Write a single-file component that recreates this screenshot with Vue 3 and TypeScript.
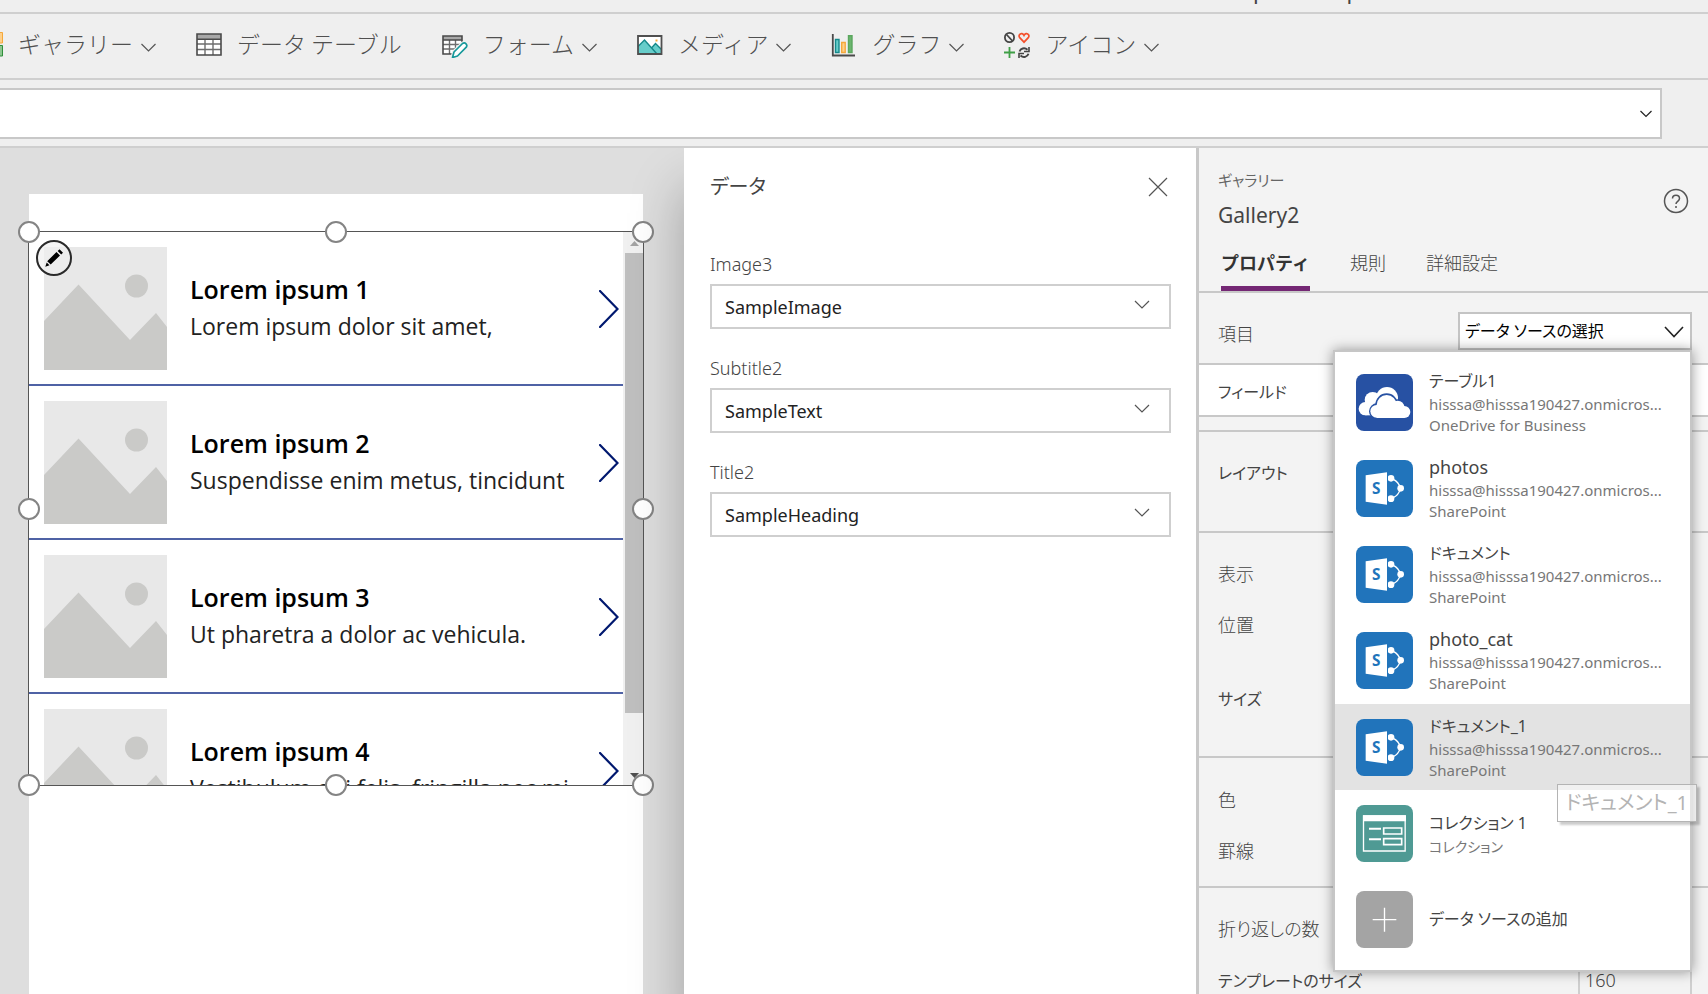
<script setup lang="ts">
import { ref } from 'vue'

interface Tool {
  id: string
  label: string
  menu: boolean
}
interface Source {
  name: string
  account?: string
  kind?: string
  kana?: boolean
  icon: 'onedrive' | 'sharepoint' | 'collection' | 'add'
}

const tools: Tool[] = [
  { id: 'gallery', label: 'ギャラリー', menu: true },
  { id: 'table', label: 'データ テーブル', menu: false },
  { id: 'form', label: 'フォーム', menu: true },
  { id: 'media', label: 'メディア', menu: true },
  { id: 'chart', label: 'グラフ', menu: true },
  { id: 'icons', label: 'アイコン', menu: true },
]

const rows = [
  { title: 'Lorem ipsum 1', text: 'Lorem ipsum dolor sit amet,' },
  { title: 'Lorem ipsum 2', text: 'Suspendisse enim metus, tincidunt' },
  { title: 'Lorem ipsum 3', text: 'Ut pharetra a dolor ac vehicula.' },
  { title: 'Lorem ipsum 4', text: 'Vestibulum dui felis, fringilla nec mi.' },
]

const handles = ['nw', 'n', 'ne', 'w', 'e', 'sw', 's', 'se']

const fields = [
  { label: 'Image3', value: 'SampleImage' },
  { label: 'Subtitle2', value: 'SampleText' },
  { label: 'Title2', value: 'SampleHeading' },
]

const account = 'hisssa@hisssa190427.onmicros...'
const sources: Source[] = [
  { name: 'テーブル1', account, kind: 'OneDrive for Business', icon: 'onedrive', kana: true },
  { name: 'photos', account, kind: 'SharePoint', icon: 'sharepoint' },
  { name: 'ドキュメント', account, kind: 'SharePoint', icon: 'sharepoint', kana: true },
  { name: 'photo_cat', account, kind: 'SharePoint', icon: 'sharepoint' },
  { name: 'ドキュメント_1', account, kind: 'SharePoint', icon: 'sharepoint', kana: true },
  { name: 'コレクション 1', kind: 'コレクション', icon: 'collection', kana: true },
  { name: 'データ ソースの追加', icon: 'add', kana: true },
]
const hovered = ref(4)
const formula = ref('')
const templateSize = ref('160')
</script>

<template>
  <div class="app">
    <header class="topbar"><span>p</span><span>p</span></header>

    <nav class="toolbar">
      <button v-for="t in tools" :key="t.id" type="button" class="tool">
        <svg class="tool-icon" viewBox="0 0 26 26" fill="none" aria-hidden="true">
          <g v-if="t.id === 'gallery'">
            <path d="M13.5 .5h12v10.500h-12z" fill="#ffd08a" stroke="#f5a83a" />
            <path d="M13.500 13.500h12v10.500h-12z" fill="#8cc68f" stroke="#2f8f3a" />
          </g>
          <g v-else-if="t.id === 'table'">
            <path d="M1 2h24v21H1z" fill="#fff" />
            <path d="M1 2h24v5H1z" fill="#a8a8a8" />
            <path d="M1 12h24M1 17.500h24M9 7v16M17 7v16" stroke="#6d6d6d" stroke-width="1.400" />
            <path d="M1 7.200h24M1 2h24v21H1z" stroke="#4a4a4a" stroke-width="1.600" />
          </g>
          <g v-else-if="t.id === 'form'">
            <path d="M1 4h19v18H1z" fill="#fff" />
            <path d="M1 4h19v4H1z" fill="#a8a8a8" />
            <path d="M1 12.500h19M1 17h14M7.500 8v14M13.500 8v12" stroke="#6d6d6d" stroke-width="1.400" />
            <path d="M20 12V4H1v18h9M1 8h19" stroke="#4a4a4a" stroke-width="1.600" />
            <path d="M10.500 25.500l1.500-5.500L20.500 11.500q2-1.200 3.500.300t.3 3.400L15.500 24z" fill="#fff" stroke="#efefef" stroke-width="4" />
            <path d="M10.500 25.500l1.500-5.500L20.500 11.500q2-1.200 3.500.300t.3 3.400L15.500 24z" fill="#fff" stroke="#16989a" stroke-width="1.700" stroke-linejoin="round" />
          </g>
          <g v-else-if="t.id === 'media'">
            <path d="M1 4h23.500v18H1z" fill="#fff" />
            <path d="M1 14.500L7.500 8l7 8 4-4.500 6 6V22H1z" fill="#67cdca" />
            <path d="M1 14.500L7.500 8 20 22M14.500 16l4-4.500 6 6" stroke="#16898a" stroke-width="1.400" />
            <path d="M18.500 7.500h2v2h-2z" fill="#f5a83a" />
            <path d="M1 4h23.500v18H1z" stroke="#4f4f4f" stroke-width="1.800" />
          </g>
          <g v-else-if="t.id === 'chart'">
            <path d="M4.500 7.500h3.500v13H4.500z" fill="#67cdca" stroke="#16898a" stroke-width="1.400" />
            <path d="M10.700 10.500h3.500v10h-3.500z" fill="#ffd08a" stroke="#f5a83a" stroke-width="1.400" />
            <path d="M17.500 3.700H21v16.800h-3.500z" fill="#6cb56f" stroke="#5aa75e" stroke-width="1.400" />
            <path d="M1.800 2v21.500H24" stroke="#4a4a4a" stroke-width="1.800" />
          </g>
          <g v-else>
            <circle cx="5.500" cy="5.500" r="4.600" stroke="#444" stroke-width="1.800" />
            <path d="M2.500 2.500l6 6.500" stroke="#444" stroke-width="1.800" />
            <path d="M20 10.200l-4.300-4.500c-1.600-2 .2-4.400 2.300-4 1 .2 1.600.9 2 1.700.4-.8 1-1.500 2-1.700 2.100-.4 3.900 2 2.300 4z" stroke="#f4502c" stroke-width="1.700" />
            <path d="M5.500 15v11M0 20.500h11" stroke="#3f9f46" stroke-width="1.800" />
            <path d="M15.500 19.500c1-3 5-4.500 8-1.700M24.500 21.800c-1 3-5 4.500-8 1.700" stroke="#444" stroke-width="1.900" />
            <path d="M25 15v4.500h-5M15 26v-4.500h5" stroke="#444" stroke-width="1.600" />
          </g>
        </svg>
        <span>{{ t.label }}</span>
        <svg v-if="t.menu" class="tool-chev" viewBox="0 0 15 15" aria-hidden="true"><path d="M.5 6l7 7 7-7" /></svg>
      </button>
    </nav>

    <div class="formula">
      <input v-model="formula" type="text" aria-label="数式" />
      <svg viewBox="0 0 12 8" aria-hidden="true"><path d="M.5 1l5.500 5.500L11.500 1" /></svg>
    </div>

    <main class="body">
      <section class="canvas">
        <div class="phone">
          <div class="selection">
            <div class="viewport">
              <ul class="rows">
                <li v-for="r in rows" :key="r.title" class="row">
                  <svg class="thumb" viewBox="0 0 123 123" aria-hidden="true">
                    <path d="M0 0h123v123H0z" fill="#e8e8e8" />
                    <path d="M0 74l34.500-36.500L86 93l26-27 11 14v43H0z" fill="#cacac8" />
                    <circle cx="92.500" cy="39" r="11.500" fill="#cacac8" />
                  </svg>
                  <div class="row-text">
                    <strong>{{ r.title }}</strong>
                    <span>{{ r.text }}</span>
                  </div>
                  <svg class="next" viewBox="0 0 20 38" aria-hidden="true"><path d="M1 1l17.500 18L1 37" /></svg>
                </li>
              </ul>
              <div class="scroll" aria-hidden="true">
                <svg viewBox="0 0 9 5"><path d="M0 5l4.500-5L9 5z" fill="#a3a3a3" /></svg>
                <div class="thumb-bar"></div>
                <svg viewBox="0 0 9 5"><path d="M0 0l4.500 5L9 0z" fill="#505050" /></svg>
              </div>
            </div>
            <button type="button" class="edit" aria-label="編集">
              <svg viewBox="0 0 18 18" aria-hidden="true">
                <path d="M11.500 3l3.500 3.500L5.700 15.500 2.200 12.300zM12.700 2L14.500.3 18 3.700 16.200 5.500zM1.700 13.500l2.800 2.800-4.200 1.400z" />
              </svg>
            </button>
            <i v-for="h in handles" :key="h" class="handle" :class="h"></i>
          </div>
        </div>
      </section>

      <section class="data">
        <div class="data-head">
          <h2>データ</h2>
          <button type="button" aria-label="閉じる">
            <svg viewBox="0 0 20 20" aria-hidden="true"><path d="M1 1l18 18M19 1L1 19" /></svg>
          </button>
        </div>
        <div v-for="f in fields" :key="f.label" class="field">
          <label :for="f.label">{{ f.label }}</label>
          <div class="pick">
            <select :id="f.label"><option>{{ f.value }}</option></select>
            <svg viewBox="0 0 16 9" aria-hidden="true"><path d="M1 1l7 7 7-7" /></svg>
          </div>
        </div>
      </section>

      <aside class="props">
        <div class="props-head">
          <div class="ident">
            <p>ギャラリー</p>
            <h1>Gallery2</h1>
          </div>
          <button type="button" class="help" aria-label="ヘルプ">
            <svg viewBox="0 0 26 26" fill="none" aria-hidden="true">
              <circle cx="13" cy="13" r="11.500" />
              <path d="M9.500 10.500c0-4.500 7-4.500 7 0 0 2.800-3.500 2.800-3.500 5.500M13 18v2" />
            </svg>
          </button>
        </div>
        <div class="tabs" role="tablist">
          <button type="button" role="tab" aria-selected="true" class="on">プロパティ</button>
          <button type="button" role="tab" aria-selected="false">規則</button>
          <button type="button" role="tab" aria-selected="false">詳細設定</button>
        </div>

        <div class="group items">
          <label for="source">項目</label>
          <div class="source">
            <select id="source"><option>データ ソースの選択</option></select>
            <svg viewBox="0 0 20 12" aria-hidden="true"><path d="M1 1l9 9.500L19 1" /></svg>
            <div class="menu">
              <ul>
                <li v-for="(s, i) in sources" :key="s.name">
                  <button type="button" :class="{ hover: i === hovered, kana: s.kana }" @mouseenter="hovered = i">
                    <svg class="src-icon" viewBox="0 0 171 171" aria-hidden="true">
                      <g v-if="s.icon === 'onedrive'">
                        <rect width="171" height="171" rx="24" fill="#2751a3" />
                        <g fill="#fff">
                          <circle cx="28" cy="104" r="20" />
                          <circle cx="50" cy="78" r="24" />
                          <circle cx="93" cy="72" r="33" />
                          <path d="M28 84h60v40H28z" />
                        </g>
                        <g fill="#2751a3">
                          <circle cx="63" cy="112" r="24" />
                          <circle cx="92" cy="92" r="34" />
                          <circle cx="126" cy="98" r="22" />
                          <circle cx="145" cy="113" r="22" />
                          <path d="M50 120h95v15H60z" />
                        </g>
                        <g fill="#fff">
                          <circle cx="62" cy="112" r="19" />
                          <circle cx="92" cy="93" r="30" />
                          <circle cx="125" cy="100" r="20" />
                          <circle cx="145" cy="114" r="18" />
                          <path d="M62 100h83v32H62z" />
                        </g>
                      </g>
                      <g v-else-if="s.icon === 'sharepoint'">
                        <rect width="171" height="171" rx="24" fill="#2174bb" />
                        <path d="M112 58q16 8 20 24M112 113q16-8 20-24" fill="none" stroke="#fff" stroke-width="4" />
                        <circle cx="105" cy="55" r="10" fill="#fff" />
                        <circle cx="134" cy="85" r="10" fill="#fff" />
                        <circle cx="105" cy="116" r="10" fill="#fff" />
                        <path d="M90 40h6v92h-6z" fill="#2174bb" />
                        <path d="M29 46l64-9v97l-64-9z" fill="#fff" />
                        <text x="61" y="102" text-anchor="middle" class="mark">S</text>
                      </g>
                      <g v-else-if="s.icon === 'collection'">
                        <rect width="171" height="171" rx="24" fill="#4f9a94" />
                        <path d="M21 31h129v18H21z" fill="#fff" />
                        <path d="M22.500 33h125v105h-125z" fill="none" stroke="#fff" stroke-width="4" />
                        <path d="M39 71h36M39 103h36" stroke="#fff" stroke-width="6" />
                        <path d="M83 69h54v18H83zM83 101h54v18H83z" fill="none" stroke="#fff" stroke-width="5" />
                      </g>
                      <g v-else>
                        <rect width="171" height="171" rx="24" fill="#a4a4a4" />
                        <path d="M50 86h71M85.500 50v72" stroke="#fff" stroke-width="4" />
                      </g>
                    </svg>
                    <span class="src-text">
                      <b>{{ s.name }}</b>
                      <small v-if="s.account">{{ s.account }}</small>
                      <small v-if="s.kind" :class="{ local: !s.account }">{{ s.kind }}</small>
                    </span>
                  </button>
                </li>
              </ul>
              <div class="tip" role="tooltip">ドキュメント_1</div>
            </div>
          </div>
        </div>
        <div class="group fieldrow"><span class="kana">フィールド</span></div>
        <div class="group spacer"></div>
        <div class="group layout"><span class="kana">レイアウト</span></div>
        <div class="group place"><span>表示</span><span>位置</span><span class="kana tall">サイズ</span></div>
        <div class="group color"><span>色</span><span>罫線</span></div>
        <div class="group last">
          <span>折り返しの数</span>
          <div class="tpl">
            <label for="tpl" class="kana">テンプレートのサイズ</label>
            <input id="tpl" v-model="templateSize" type="text" />
          </div>
        </div>
      </aside>
    </main>
  </div>
</template>

<style>
body {
  margin: 0;
  overflow: hidden;
}
</style>

<style scoped>
* {
  box-sizing: border-box;
}
.app {
  height: 100vh;
  display: flex;
  flex-direction: column;
  overflow: hidden;
  background: #efefef;
  color: #444;
  font-family: "Noto Sans", "Noto Sans CJK JP", sans-serif;
  font-size: 18px;
}
button,
input,
select {
  font: inherit;
  color: inherit;
  background: none;
  border: 0;
  border-radius: 0;
  padding: 0;
  margin: 0;
}
select {
  appearance: none;
}
ul,
p,
h1,
h2 {
  list-style: none;
  margin: 0;
  padding: 0;
  font-weight: 400;
}
svg {
  display: block;
  flex: none;
}
.topbar {
  flex: none;
  height: 14px;
  border-bottom: 2px solid #cfcfcf;
  display: flex;
  justify-content: flex-end;
  gap: 80px;
  padding-right: 348px;
  font-size: 22px;
  line-height: 0;
  overflow: hidden;
}
.topbar span {
  margin-top: -10px;
}
.toolbar {
  flex: none;
  height: 66px;
  border-bottom: 2px solid #cfcfcf;
  display: flex;
  align-items: center;
  gap: 40px;
  margin-left: -23px;
  padding-bottom: 2px;
}
.tool {
  display: flex;
  align-items: center;
  font-family: "Noto Sans CJK JP", sans-serif;
  font-size: 23px;
  line-height: 32px;
  font-weight: 300;
  color: #505050;
  white-space: nowrap;
}
.tool span {
  padding-bottom: 4px;
}
.tool-icon {
  width: 26px;
  height: 26px;
  margin-right: 15px;
}
.tool-chev {
  width: 15px;
  height: 15px;
  margin-left: 8px;
}
.tool-chev path,
.formula path,
.pick path,
.source > svg path,
.data-head path {
  fill: none;
  stroke: #555;
  stroke-width: 1.2;
}
.formula {
  flex: none;
  height: 51px;
  margin: 8px 46px 7px 0;
  border: 2px solid #c8c8c8;
  border-left: 0;
  background: #fff;
  display: flex;
  align-items: center;
  padding-right: 8px;
}
.formula input {
  flex: 1;
  height: 100%;
  outline: 0;
}
.formula svg {
  width: 12px;
  height: 8px;
}
.formula path {
  stroke: #222;
}
.body {
  flex: 1;
  min-height: 0;
  border-top: 2px solid #cfcfcf;
  display: grid;
  grid-template-columns: minmax(0, 1fr) 515px 509px;
}
.canvas {
  background: #dedede;
  padding: 46px 41px 0 29px;
  min-width: 0;
  overflow: hidden;
}
.phone {
  background: #fff;
  height: 100%;
  padding-top: 37px;
}
.selection {
  position: relative;
  height: 555px;
  margin: 0 -1px;
  border: 1px solid #555;
}
.viewport {
  height: 100%;
  display: flex;
  overflow: hidden;
}
.rows {
  flex: 1;
  min-width: 0;
}
.row {
  height: 154px;
  border-bottom: 2px solid #4f62a5;
  display: flex;
  align-items: center;
  padding: 1px 4px 0 15px;
  font-family: "Open Sans", sans-serif;
  color: #000;
  white-space: nowrap;
}
.thumb {
  width: 123px;
  height: 123px;
}
.row-text {
  flex: 1;
  min-width: 0;
  padding: 0 0 2px 23px;
}
.row-text strong,
.row-text span {
  display: block;
  font-size: 25px;
  line-height: 37px;
  font-weight: 600;
}
.row-text span {
  font-size: 23px;
  font-weight: 400;
  color: #222;
}
.next {
  width: 20px;
  height: 38px;
}
.next path {
  fill: none;
  stroke: #00186f;
  stroke-width: 2.2;
  stroke-linecap: round;
}
.scroll {
  width: 20px;
  background: #f0f0f0;
  display: flex;
  flex-direction: column;
  align-items: center;
  padding: 9px 0 7px 2px;
}
.scroll svg {
  width: 9px;
  height: 5px;
}
.thumb-bar {
  width: 100%;
  height: 460px;
  margin: 7px 0 auto;
  background: #bfbfbf;
}
.edit {
  position: absolute;
  left: 7px;
  top: 8px;
  width: 36px;
  height: 36px;
  border: 2px solid #2a2a2a;
  border-radius: 50%;
  background: rgba(240, 240, 240, 0.7);
  display: grid;
  place-items: center;
}
.edit svg {
  width: 18px;
  height: 18px;
}
.handle {
  position: absolute;
  width: 22px;
  height: 22px;
  margin: -11px;
  border: 2px solid #848484;
  border-radius: 50%;
  background: #fff;
}
.nw, .w, .sw { left: 0; }
.n, .s { left: 50%; }
.ne, .e, .se { left: 100%; }
.nw, .n, .ne { top: 0; }
.w, .e { top: 50%; }
.sw, .s, .se { top: 100%; }

.data {
  position: relative;
  background: #fff;
  border-right: 3px solid #c8c8c8;
  padding: 23px 25px 0 26px;
  box-shadow: 0 40px 50px rgba(0, 0, 0, 0.28);
  clip-path: inset(0 0 0 -80px);
}
.data-head {
  display: flex;
  align-items: center;
  justify-content: space-between;
  height: 32px;
  margin-bottom: 46px;
  padding-right: 3px;
}
.data-head h2 {
  font-size: 20px;
  line-height: 32px;
  font-feature-settings: "palt";
}
.data-head svg {
  width: 20px;
  height: 20px;
}
.field {
  display: flex;
  flex-direction: column;
  height: 104px;
}
.field label {
  line-height: 30px;
  margin-bottom: 5px;
  font-weight: 300;
}
.pick {
  position: relative;
  height: 45px;
  border: 2px solid #cfcfcf;
}
.pick select {
  width: 100%;
  height: 100%;
  padding-left: 13px;
  color: #222;
}
.pick svg {
  position: absolute;
  right: 19px;
  top: 14px;
  width: 16px;
  height: 9px;
  pointer-events: none;
}
.props {
  background: #f3f3f3;
  min-width: 0;
}
.props-head {
  display: flex;
  justify-content: space-between;
  align-items: center;
  padding: 12px 19px 0 19px;
  height: 94px;
}
.ident p {
  line-height: 28px;
  font-size: 15px;
  color: #666;
  font-feature-settings: "palt";
}
.ident h1 {
  font-size: 21px;
  line-height: 42px;
}
.help svg {
  width: 26px;
  height: 26px;
}
.help path,
.help circle {
  stroke: #555;
  stroke-width: 1.5;
}
.tabs {
  display: flex;
  gap: 40px;
  height: 51px;
  padding-left: 22px;
  border-bottom: 2px solid #c8c8c8;
}
.tabs button {
  height: 49px;
  line-height: 42px;
  padding-bottom: 2px;
  border-bottom: 5px solid transparent;
  font-weight: 300;
}
.tabs .on {
  font-weight: 700;
  color: #333;
  border-color: #742774;
}
.group {
  border-bottom: 2px solid #c8c8c8;
  padding-left: 19px;
  display: flex;
  flex-direction: column;
  font-weight: 300;
  font-feature-settings: "palt";
}
.group > span {
  line-height: 51px;
}
.kana {
  font-size: 16px;
  font-weight: 400;
}
.items {
  flex-direction: row;
  justify-content: space-between;
  height: 72px;
  padding: 19px 16px 0 19px;
}
.items label {
  line-height: 44px;
}
.source {
  position: relative;
  width: 234px;
  height: 38px;
  border: 2px solid #c4c4c4;
  background: #fff;
  font-size: 16px;
  font-weight: 400;
}
.source select {
  width: 100%;
  height: 100%;
  padding-left: 5px;
  color: #000;
  font-feature-settings: "palt";
}
.source > svg {
  position: absolute;
  right: 6px;
  top: 12px;
  width: 20px;
  height: 12px;
  pointer-events: none;
}
.source > svg path {
  stroke: #222;
  stroke-width: 1.6;
}
.fieldrow {
  background: #fff;
  height: 52px;
  padding-top: 3px;
}
.fieldrow span {
  line-height: 49px;
}
.spacer {
  height: 15px;
}
.layout {
  height: 101px;
  padding-top: 16px;
}
.place {
  height: 225px;
  padding-top: 16px;
}
.place .tall {
  line-height: 96px;
}
.color {
  height: 130px;
  padding-top: 17px;
}
.last {
  border: 0;
  padding-top: 16px;
}
.tpl {
  display: flex;
  justify-content: space-between;
  align-items: center;
  height: 50px;
  padding-right: 16px;
}
.tpl input {
  width: 114px;
  height: 40px;
  border: 2px solid #cfcfcf;
  padding-left: 5px;
}
.menu {
  position: absolute;
  top: 36px;
  right: -2px;
  width: 359px;
  border: 2px solid #c6c6c6;
  background: #fff;
  padding: 7px 0;
  box-shadow: 0 0 12px rgba(0, 0, 0, 0.4);
}
.menu ul {
  display: grid;
  grid-template-rows: repeat(7, 1fr);
  height: 604px;
}
.menu li {
  display: grid;
}
.menu button {
  display: flex;
  align-items: center;
  gap: 16px;
  padding: 0 21px;
  text-align: left;
  min-width: 0;
}
.menu .hover {
  background: #e3e3e3;
}
.src-icon {
  width: 57px;
  height: 57px;
}
.mark {
  font: 700 46px "Noto Sans", sans-serif;
  fill: #2174bb;
}
.src-text {
  flex: 1;
  min-width: 0;
}
.src-text b,
.src-text small {
  display: block;
  font-weight: 400;
  font-size: 18px;
  line-height: 25px;
  white-space: nowrap;
  font-feature-settings: "palt";
}
.kana .src-text b {
  font-size: 16px;
}
.src-text small {
  font-size: 15px;
  line-height: 21px;
  color: #777;
}
.src-text .local {
  font-size: 14px;
}
.tip {
  position: absolute;
  right: -7px;
  top: 432px;
  height: 38px;
  padding: 0 8px;
  border: 1px solid #b4b4b4;
  background: rgba(255, 255, 255, 0.5);
  box-shadow: 3px 3px 2px rgba(0, 0, 0, 0.2);
  color: #b4b4b4;
  font-size: 20px;
  line-height: 36px;
  white-space: nowrap;
  font-feature-settings: "palt";
}
</style>
